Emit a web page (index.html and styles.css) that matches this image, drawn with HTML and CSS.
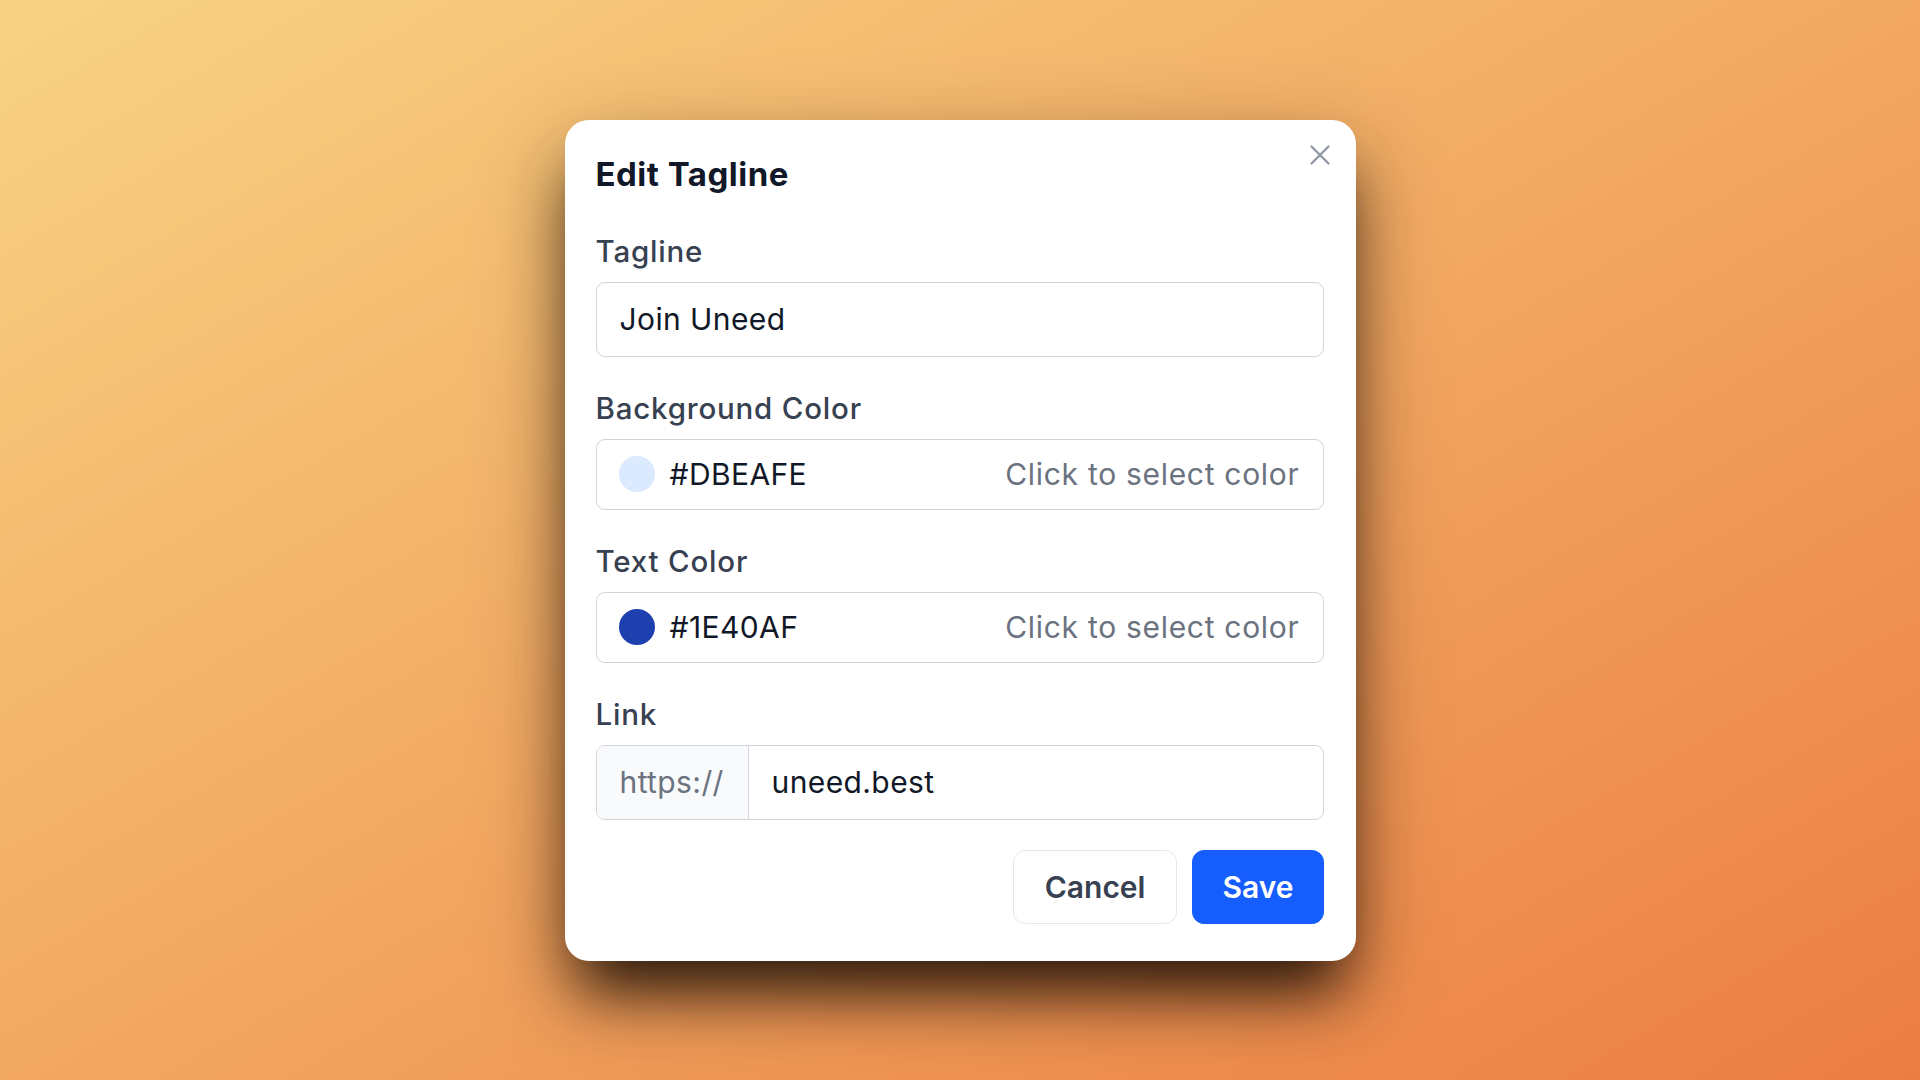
FILE: index.html
```html
<!DOCTYPE html>
<html lang="en">
<head>
<meta charset="utf-8">
<title>Edit Tagline</title>
<link rel="stylesheet" href="styles.css">
</head>
<body>
<div class="overlay">
  <div class="modal">
    <button class="close" aria-label="Close">
      <svg viewBox="0 0 24 24" width="24" height="24" fill="none" stroke="currentColor" stroke-width="2.3" stroke-linecap="round"><path d="M3.5 3.5L20.5 20.5M20.5 3.5L3.5 20.5"/></svg>
    </button>
    <h2 class="title">Edit Tagline</h2>
    <div class="fields">
      <div class="field">
        <div class="label">Tagline</div>
        <div class="input">Join Uneed</div>
      </div>
      <div class="field">
        <div class="label">Background Color</div>
        <div class="input color-input">
          <span class="swatch swatch-light"></span>
          <span class="hex">#DBEAFE</span>
          <span class="hint">Click to select color</span>
        </div>
      </div>
      <div class="field">
        <div class="label">Text Color</div>
        <div class="input color-input">
          <span class="swatch swatch-dark"></span>
          <span class="hex">#1E40AF</span>
          <span class="hint">Click to select color</span>
        </div>
      </div>
      <div class="field">
        <div class="label">Link</div>
        <div class="input link-input">
          <span class="prefix">https://</span>
          <span class="link-value">uneed.best</span>
        </div>
      </div>
    </div>
    <div class="actions">
      <button class="btn btn-cancel">Cancel</button>
      <button class="btn btn-save">Save</button>
    </div>
  </div>
</div>
</body>
</html>
```
FILE: styles.css
```css
* { box-sizing: border-box; }
html, body { margin: 0; padding: 0; }
body {
  font-family: Inter, "Noto Sans", "Liberation Sans", sans-serif;
  background: linear-gradient(to bottom right, #f8d383 0%, #f2a862 50%, #ec7d42 100%);
  min-height: 100vh;
}
.overlay {
  min-height: 100vh;
  display: flex;
  align-items: center;
  justify-content: center;
}
.modal {
  position: relative;
  width: 791px;
  background: #fff;
  border-radius: 24px;
  padding: 34px 32px 37px 31px;
  box-shadow: 0 42px 60px -14px rgba(10, 4, 0, 0.8), 0 30px 90px rgba(40, 20, 0, 0.35);
}
.close {
  position: absolute;
  top: 23px;
  right: 24px;
  width: 24px;
  height: 24px;
  padding: 0;
  border: 0;
  background: transparent;
  color: #8f96a3;
  display: flex;
}
.title {
  margin: 0;
  font-size: 33px;
  line-height: 40px;
  font-weight: 700;
  color: #111827;
  letter-spacing: 0.5px;
}
.fields {
  margin-top: 40px;
  display: flex;
  flex-direction: column;
  gap: 34px;
}
.field {
  display: flex;
  flex-direction: column;
  gap: 13px;
}
.label {
  font-size: 29.5px;
  line-height: 35px;
  font-weight: 500;
  color: #374151;
  letter-spacing: 0.8px;
}
.input {
  height: 75px;
  border: 1px solid #d1d5db;
  border-radius: 9px;
  padding: 0 23px;
  display: flex;
  align-items: center;
  font-size: 30px;
  letter-spacing: 0.4px;
  color: #111827;
}
.color-input {
  height: 71px;
  padding: 0 23px 0 22px;
}
.swatch {
  width: 36px;
  height: 36px;
  border-radius: 50%;
  flex: none;
}
.swatch-light { background: #dbeafe; }
.swatch-dark { background: #1e40af; }
.hex {
  margin-left: 15px;
  color: #111827;
}
.hint {
  margin-left: auto;
  color: #6b7280;
  letter-spacing: 0.7px;
}
.link-input {
  padding: 0;
  overflow: hidden;
}
.prefix {
  align-self: stretch;
  width: 152px;
  display: flex;
  align-items: center;
  padding-left: 23px;
  background: #f9fafb;
  border-right: 1px solid #d1d5db;
  color: #6b7280;
}
.link-value {
  padding-left: 23px;
}
.actions {
  margin-top: 30px;
  display: flex;
  justify-content: flex-end;
  gap: 15px;
}
.btn {
  height: 74px;
  border-radius: 12px;
  font-family: inherit;
  font-size: 30px;
  font-weight: 600;
  padding: 0 31px;
  cursor: pointer;
}
.btn-cancel {
  background: #fff;
  border: 1px solid #e5e7eb;
  color: #374151;
}
.btn-save {
  background: #155dfc;
  border: 1px solid #155dfc;
  color: #fff;
  padding: 0 29px;
}
```
